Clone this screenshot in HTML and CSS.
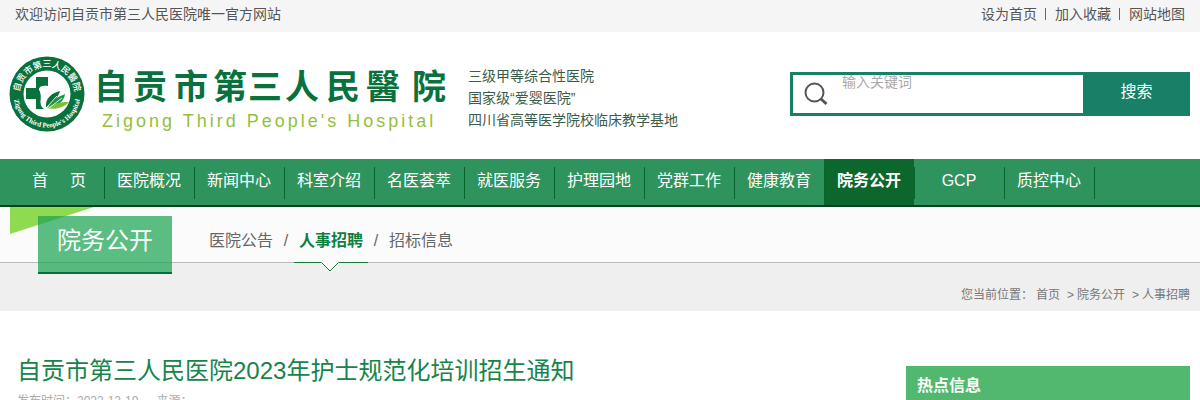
FILE: index.html
```html
<!DOCTYPE html>
<html lang="zh-CN">
<head>
<meta charset="utf-8">
<title>自贡市第三人民医院</title>
<link rel="stylesheet" href="styles.css">
</head>
<body>
<div class="topbar">
  <span>欢迎访问自贡市第三人民医院唯一官方网站</span>
  <div class="toplinks"><a href="#">设为首页</a><a href="#">加入收藏</a><a href="#">网站地图</a></div>
</div>
<header class="header">
  <a class="logo" href="#" aria-label="自贡市第三人民医院">
    <svg width="440" height="80" viewBox="8 54 440 80">
      <defs>
        <path id="arcTop" d="M22 106A27.500 27.500 0 1 1 72 106"/>
        <path id="arcBottom" d="M13.500 94A33.500 33.500 0 0 0 80.500 94"/>
      </defs>
      <circle cx="47" cy="94" r="37.500" fill="#08713c"/>
      <circle cx="47" cy="94" r="23.500" fill="#fff"/>
      <text class="seal-cn"><textPath href="#arcTop" startOffset="50%" text-anchor="middle">自贡市第三人民醫院</textPath></text>
      <text class="seal-en"><textPath href="#arcBottom" startOffset="50%" text-anchor="middle">Zigong Third People's Hospital</textPath></text>
      <path fill="#08713c" d="M36 77H48V86C43 85 39 87 39 90C41 91 42 94 41 99C40 104 41 107 44 109H36V99H26V88H36Z"/>
      <path fill="#fff" d="M39 89C40 86 43 85 45 87C48 91 43 99 43 107C39 104 42 97 40 92Z"/>
      <path fill="#08713c" d="M46 107C45 98 52 93 60 91C58 98 53 104 46 107Z"/>
      <path fill="#19934a" d="M48 108C51 100 58 97 65 94C64 102 57 106 48 108Z"/>
      <path fill="#7fbd36" d="M47 108C53 103 60 102 69 102C64 108 55 110 47 108Z"/>
      <path d="M47 107L57 96M49 108L62 98" stroke="#e8f5d8" fill="none"/>
      <text class="logo-cn" y="99" x="94 133 174 213 248 285 326 366 412">自贡市第三人民醫院</text>
      <text class="logo-en" x="102" y="127">Zigong Third People's Hospital</text>
    </svg>
  </a>
  <p class="honors">三级甲等综合性医院<br>国家级“爱婴医院”<br>四川省高等医学院校临床教学基地</p>
  <form class="search">
    <label class="search-icon" for="keyword" aria-label="关键词">
      <svg width="24" height="24" viewBox="0 0 24 24"><circle cx="10.500" cy="10.500" r="9" fill="none" stroke="#555" stroke-width="2"/><path d="M17 17L22.500 22" stroke="#555" stroke-width="3"/></svg>
    </label>
    <input id="keyword" type="text" placeholder="输入关键词">
    <button type="button">搜索</button>
  </form>
</header>
<nav class="nav">
  <a href="#">首&nbsp;&nbsp;&nbsp;&nbsp;&nbsp;页</a><a href="#">医院概况</a><a href="#">新闻中心</a><a href="#">科室介绍</a><a href="#">名医荟萃</a><a href="#">就医服务</a><a href="#">护理园地</a><a href="#">党群工作</a><a href="#">健康教育</a><a class="current" href="#">院务公开</a><a href="#">GCP</a><a href="#">质控中心</a>
</nav>
<section class="banner">
  <svg class="wedge" width="84" height="27" viewBox="0 0 84 27"><path d="M0 0H84L0 27Z" fill="#8fdb50"/></svg>
  <h2 class="section-title">院务公开</h2>
  <div class="tabs">
    <a href="#">医院公告</a><span>/</span>
    <a class="current" href="#">人事招聘<svg class="notch" width="74" height="10" viewBox="0 0 74 10"><path d="M27 0H45V1L36 10L27 1Z" fill="#fbfbfb"/><path d="M0 .5H27.500L36 9L44.500 .5H74" fill="none" stroke="#11803f"/></svg></a>
    <span>/</span><a href="#">招标信息</a>
  </div>
</section>
<div class="crumbs"><span>您当前位置：</span><a href="#">首页</a><span class="sep">&gt;</span><a href="#">院务公开</a><span class="sep">&gt;</span><a href="#">人事招聘</a></div>
<main class="main">
  <article class="article">
    <h1>自贡市第三人民医院2023年护士规范化培训招生通知</h1>
    <p class="meta"><span>发布时间：2022-12-19</span><span>来源：</span></p>
  </article>
  <aside class="side"><h3>热点信息</h3></aside>
</main>
</body>
</html>
```
FILE: styles.css
```css
* { box-sizing: border-box; }
body {
  margin: 0;
  background: #fff;
  color: #555;
  font: 14px/20px "Liberation Sans", "Noto Sans CJK SC", sans-serif;
}
a { color: inherit; text-decoration: none; }
h1, h2, h3, p { margin: 0; }

.topbar {
  display: flex;
  justify-content: space-between;
  height: 32px;
  padding: 4px 15px;
  background: #f5f5f5;
}
.toplinks { display: flex; align-items: center; height: 20px; }
.toplinks a + a {
  margin-left: 8px;
  padding-left: 10px;
  background: linear-gradient(#666, #666) left center / 1px 12px no-repeat;
}

.header {
  display: flex;
  align-items: flex-start;
  height: 127px;
  padding: 22px 10px 0 8px;
}
.logo svg { display: block; }
.logo-cn { font: 700 34px "Noto Sans CJK SC", sans-serif; fill: #08713c; }
.logo-en { font-size: 18px; letter-spacing: 3px; fill: #93bf3c; }
.seal-cn { font: 500 9px "Noto Sans CJK SC", sans-serif; fill: #fff; }
.seal-en { font: 700 7px "Liberation Serif", serif; fill: #fff; }
.honors { margin: 11px 0 0 20px; line-height: 22px; color: #3c5c4b; }
.search {
  display: flex;
  width: 400px;
  height: 44px;
  margin: 18px 0 0 auto;
  border: 3px solid #178066;
}
.search-icon { padding: 7px 14px 7px 11px; }
.search input {
  flex: 1;
  min-width: 0;
  height: 14px;
  padding: 0;
  border: 0;
  outline: 0;
  font: inherit;
  line-height: 14px;
}
.search input::placeholder { color: #aaa; }
.search button {
  width: 104px;
  padding: 0 0 4px 3px;
  border: 0;
  background: #178066;
  color: #fff;
  font: inherit;
  font-size: 16px;
}

.nav {
  display: flex;
  height: 48px;
  padding-left: 14px;
  border-bottom: 2px solid #07401f;
  background: #2f935d;
  color: #fff;
  font-size: 16px;
  line-height: 44px;
  text-align: center;
}
.nav a { width: 90px; }
.nav a + a,
.nav::after {
  background: linear-gradient(#07642c, #07642c) left 8px / 1px 32px no-repeat;
}
.nav::after { content: ""; width: 1px; }
.nav .current { background-color: #0b672b; font-weight: 700; }

.banner {
  position: relative;
  display: flex;
  height: 56px;
  padding-left: 38px;
  border-bottom: 1px solid #bbb;
  background: #fbfbfb;
}
.wedge { position: absolute; left: 10px; top: 0; }
.section-title {
  position: relative;
  width: 134px;
  height: 58px;
  margin-top: 9px;
  border-bottom: 2px solid #07703a;
  background: rgba(24, 163, 80, .7);
  color: #fff;
  font-size: 24px;
  font-weight: 400;
  line-height: 50px;
  text-align: center;
}
.tabs {
  display: flex;
  margin-left: 37px;
  color: #666;
  font-size: 16px;
  line-height: 68px;
}
.tabs span { width: 26px; text-align: center; }
.tabs .current { position: relative; color: #11803f; font-weight: 700; }
.notch { position: absolute; left: -5px; top: 55px; }

.crumbs {
  display: flex;
  justify-content: flex-end;
  height: 48px;
  padding: 22px 10px 0;
  background: #efefef;
  color: #777;
  font-size: 12px;
}
.crumbs .sep { margin: 0 3px 0 7px; }
.crumbs a:first-of-type { margin-left: 3px; }

.main {
  display: flex;
  justify-content: space-between;
  padding: 40px 10px 0 17px;
}
.article h1 {
  color: #17844a;
  font-size: 24px;
  font-weight: 400;
  line-height: 40px;
}
.meta { display: flex; gap: 18px; color: #aaa; font-size: 12px; }
.side { width: 284px; margin-top: 15px; }
.side h3 {
  padding-left: 11px;
  background: #52b86f;
  color: #fff;
  font-size: 16px;
  line-height: 40px;
}
```
